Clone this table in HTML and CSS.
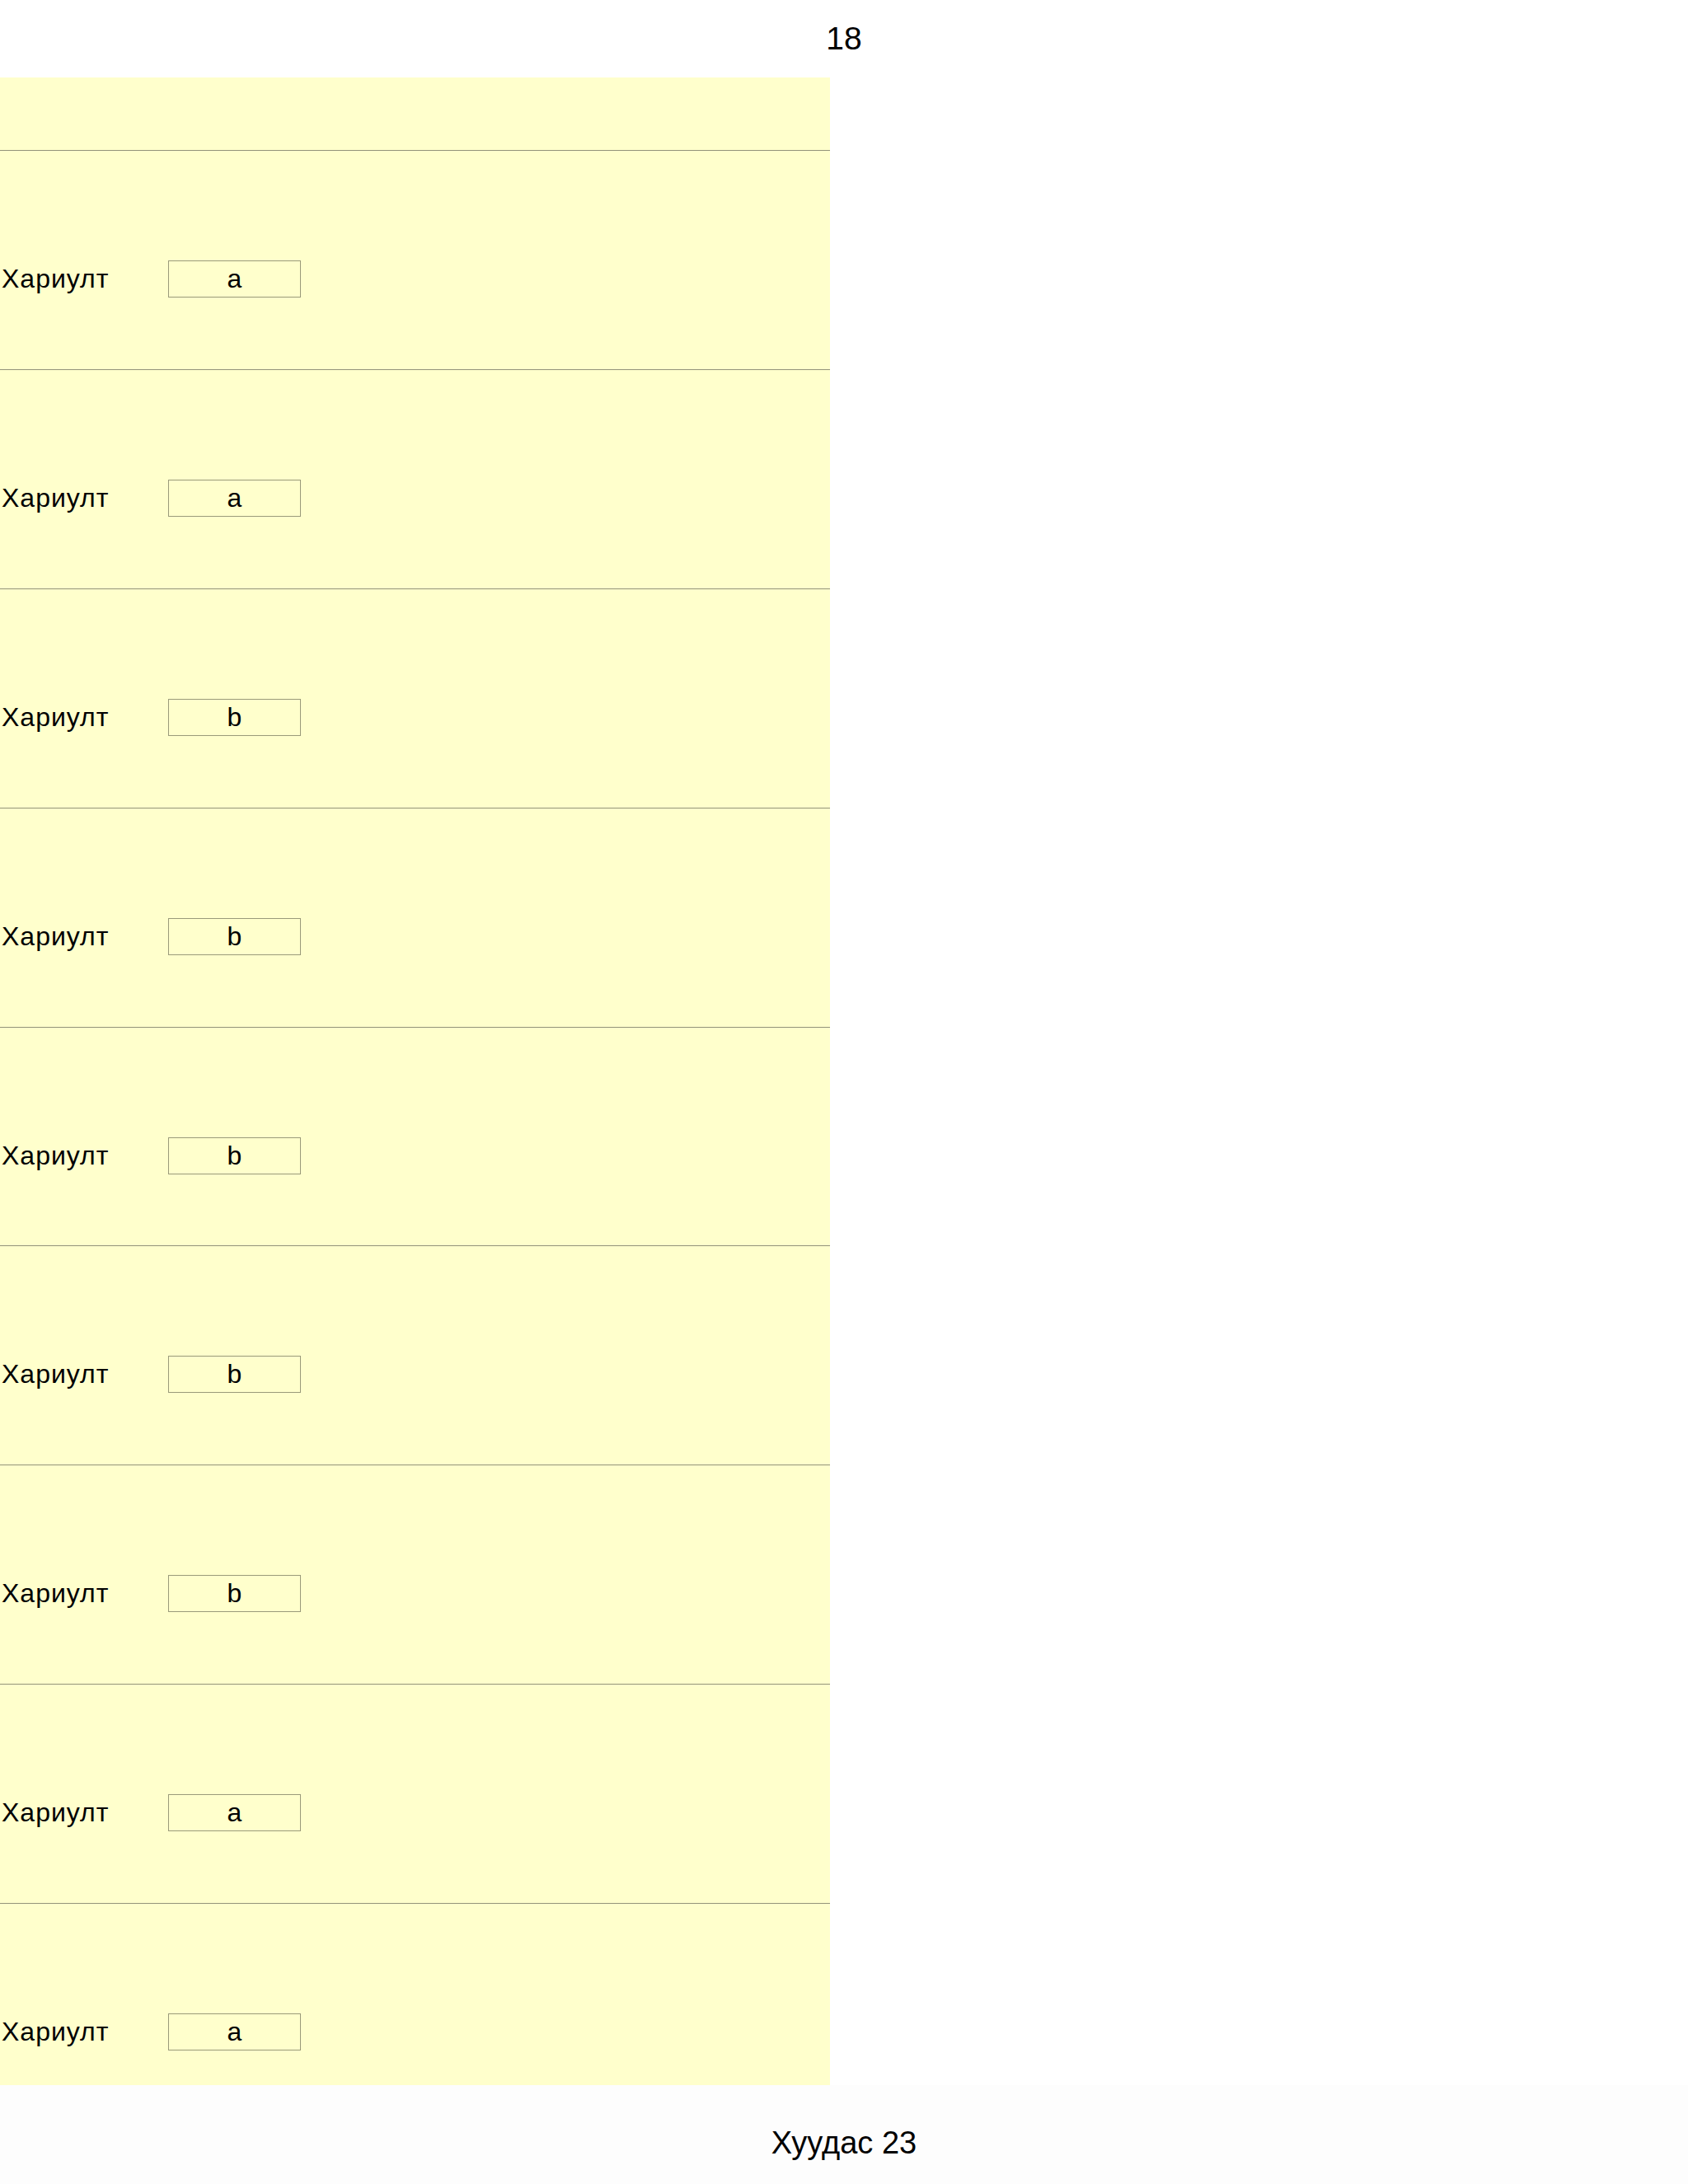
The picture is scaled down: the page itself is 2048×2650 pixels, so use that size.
FILE: index.html
```html
<!DOCTYPE html>
<html lang="mn">
<head>
    <meta charset="UTF-8">
    <title>Хуудас 23</title>
    <link rel="stylesheet" href="styles.css">
</head>
<body>
    <header class="page-top">18</header>

    <main class="sheet">
        <div class="sheet-head"></div>
        <div class="answer-row"><span class="answer-label">Хариулт</span><span class="answer-box">a</span></div>
        <div class="answer-row"><span class="answer-label">Хариулт</span><span class="answer-box">a</span></div>
        <div class="answer-row"><span class="answer-label">Хариулт</span><span class="answer-box">b</span></div>
        <div class="answer-row"><span class="answer-label">Хариулт</span><span class="answer-box">b</span></div>
        <div class="answer-row"><span class="answer-label">Хариулт</span><span class="answer-box">b</span></div>
        <div class="answer-row"><span class="answer-label">Хариулт</span><span class="answer-box">b</span></div>
        <div class="answer-row"><span class="answer-label">Хариулт</span><span class="answer-box">b</span></div>
        <div class="answer-row"><span class="answer-label">Хариулт</span><span class="answer-box">a</span></div>
        <div class="answer-row last"><span class="answer-label">Хариулт</span><span class="answer-box">a</span></div>
    </main>

    <footer class="page-foot">Хуудас 23</footer>
</body>
</html>
```

FILE: styles.css
```css
* {
    margin: 0;
    padding: 0;
    box-sizing: border-box;
}

body {
    font-family: 'Liberation Sans', Arial, sans-serif;
    background: #fff;
    color: #000;
    width: 2048px;
}

.page-top {
    height: 94px;
    font-size: 39px;
    line-height: 1;
    padding-top: 27px;
    text-align: center;
}

.sheet {
    width: 1007px;
    background: #ffffcc;
    padding-top: 88px;
}

/* each answer row: rule on top, label + box in the lower part */
.answer-row {
    height: 265.875px;
    border-top: 1px solid #93937a;
    padding: 133px 0 0 2px;
    display: flex;
    align-items: flex-start;
}

.answer-row.last {
    height: 221px;
}

.answer-label {
    width: 202px;
    height: 45px;
    font-size: 32px;
    letter-spacing: 1px;
    line-height: 45px;
}

.answer-box {
    width: 161px;
    height: 45px;
    border: 1px solid #9a9a7a;
    font-size: 32px;
    line-height: 42px;
    text-align: center;
}

.page-foot {
    height: 120px;
    background: #fdfdfd;
    font-size: 38px;
    line-height: 1;
    padding-top: 51px;
    text-align: center;
}
```
